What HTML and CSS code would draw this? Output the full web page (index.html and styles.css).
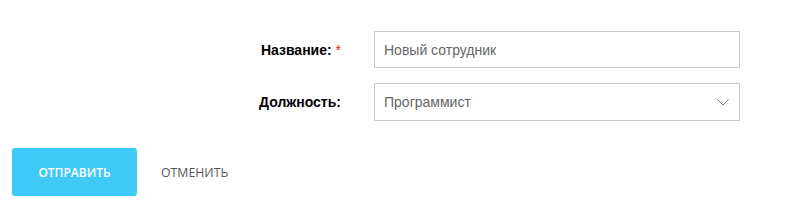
FILE: index.html
```html
<!DOCTYPE html>
<html lang="ru">
<head>
    <meta charset="UTF-8">
    <title>Новый сотрудник</title>
    <link rel="stylesheet" href="styles.css">
</head>
<body>
    <form class="employee-form">
        <div class="form-grid">
            <label class="field-label" for="name">Название: <span class="required">*</span></label>
            <input class="field-input" id="name" type="text" value="Новый сотрудник">

            <label class="field-label" for="position">Должность:</label>
            <div class="select-wrap">
                <select class="field-input field-select" id="position">
                    <option>Программист</option>
                </select>
                <svg class="select-arrow" width="12" height="7" viewBox="0 0 12 7">
                    <path d="M0.5 0.5 L6 6 L11.5 0.5" fill="none" stroke="#777" stroke-width="1"/>
                </svg>
            </div>
        </div>

        <div class="form-actions">
            <button class="btn btn-submit" type="button">Отправить</button>
            <button class="btn btn-cancel" type="button">Отменить</button>
        </div>
    </form>
</body>
</html>
```

FILE: styles.css
```css
* {
    margin: 0;
    padding: 0;
    box-sizing: border-box;
}

body {
    background-color: #fff;
    font-family: 'Liberation Sans', Arial, sans-serif;
}

.employee-form {
    padding: 31px 0 0 12px;
}

.form-grid {
    display: grid;
    grid-template-columns: 329px 366px;
    column-gap: 33px;
    row-gap: 15px;
    align-items: center;
}

.field-label {
    text-align: right;
    font-size: 14px;
    font-weight: bold;
    color: #000;
}

.required {
    color: #e02020;
    font-weight: normal;
}

.field-input {
    width: 100%;
    height: 37px;
    border: 1px solid #ccc;
    background: #fff;
    padding: 0 9px;
    font-family: 'Liberation Sans', Arial, sans-serif;
    font-size: 14px;
    color: #666;
    outline: none;
}

.select-wrap {
    position: relative;
}

.field-select {
    height: 38px;
    appearance: none;
    -webkit-appearance: none;
    border-radius: 0;
}

.select-arrow {
    position: absolute;
    right: 11px;
    top: 16px;
    pointer-events: none;
}

.form-actions {
    display: flex;
    align-items: center;
    margin-top: 27px;
}

.btn {
    font-family: 'Open Sans', sans-serif;
    font-size: 12px;
    text-transform: uppercase;
    border: none;
    cursor: pointer;
}

.btn-submit {
    width: 125px;
    height: 48px;
    background-color: #3ec9f6;
    color: #fff;
    font-weight: 600;
    border-radius: 3px;
}

.btn-cancel {
    background: none;
    color: #555;
    padding: 0 24px;
    height: 48px;
    font-size: 12.3px;
}
```
